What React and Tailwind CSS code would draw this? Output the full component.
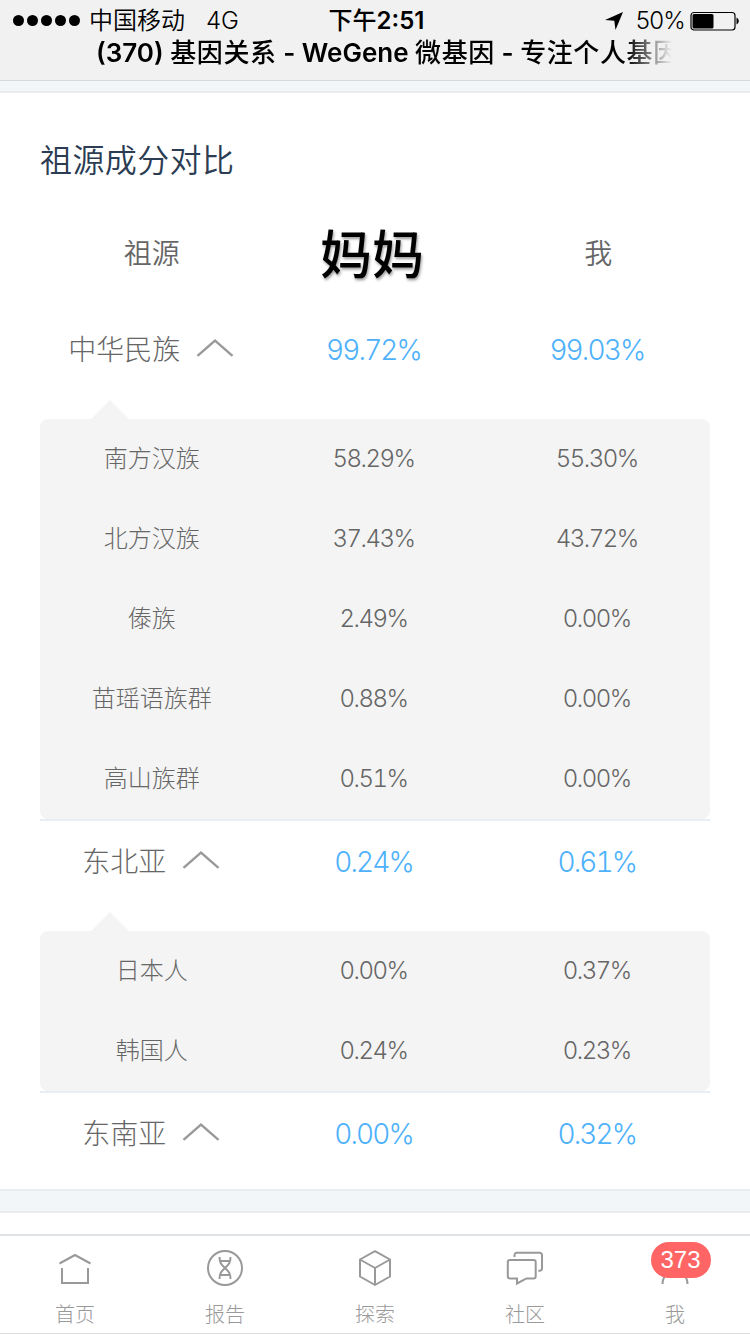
// App.jsx

// One block per ancestry group; each value pair is [mother, me].
const groups = [
  {
    name: "中华民族",
    values: ["99.72%", "99.03%"],
    rows: [
      { name: "南方汉族", values: ["58.29%", "55.30%"] },
      { name: "北方汉族", values: ["37.43%", "43.72%"] },
      { name: "傣族", values: ["2.49%", "0.00%"] },
      { name: "苗瑶语族群", values: ["0.88%", "0.00%"] },
      { name: "高山族群", values: ["0.51%", "0.00%"] },
    ],
  },
  {
    name: "东北亚",
    values: ["0.24%", "0.61%"],
    rows: [
      { name: "日本人", values: ["0.00%", "0.37%"] },
      { name: "韩国人", values: ["0.24%", "0.23%"] },
    ],
  },
  { name: "东南亚", values: ["0.00%", "0.32%"], rows: [] },
];

const iconProps = {
  viewBox: "0 0 40 40",
  className: "w-10 h-10",
  fill: "none",
  stroke: "currentColor",
  strokeWidth: 2,
};

function HomeIcon() {
  return (
    <svg {...iconProps}>
      <path d="M4.500 15.500L20 7l15.500 8.500" />
      <path d="M7 20v15h26V20" />
    </svg>
  );
}

function DnaIcon() {
  return (
    <svg {...iconProps}>
      <circle cx="20" cy="20" r="17" />
      <path d="M14.500 9c0 6.500 2.500 8 5.500 11s5.500 4.500 5.500 11M25.500 9c0 6.500-2.500 8-5.500 11s-5.500 4.500-5.500 11" />
      <path d="M15 13h10M15 27h10" />
    </svg>
  );
}

function CubeIcon() {
  return (
    <svg {...iconProps} strokeLinejoin="round">
      <path d="M20 3.200L35 11.500V28.500L20 37L5 28.500V11.500z" />
      <path d="M5 11.500L20 20l15-8.500M20 20v17" />
    </svg>
  );
}

function ChatIcon() {
  return (
    <svg {...iconProps}>
      <path d="M9.500 9V7A2.200 2.200 0 0 1 11.700 4.800H34.800A2.200 2.200 0 0 1 37 7v13.500a2.200 2.200 0 0 1-2.200 2.200h-1.500" />
      <path d="M5 12h23.500a2.200 2.200 0 0 1 2.200 2.200v14a2.200 2.200 0 0 1-2.200 2.200h-7L12 35.500v-5.100H5a2.200 2.200 0 0 1-2.200-2.200v-14A2.200 2.200 0 0 1 5 12z" />
    </svg>
  );
}

function UserIcon() {
  return (
    <svg {...iconProps}>
      <circle cx="20" cy="13" r="8" />
      <path d="M7.500 36c0-17 25-17 25 0" />
    </svg>
  );
}

const tabs = [
  { label: "首页", Icon: HomeIcon },
  { label: "报告", Icon: DnaIcon },
  { label: "探索", Icon: CubeIcon },
  { label: "社区", Icon: ChatIcon },
  { label: "我", Icon: UserIcon, badge: 373 },
];

function StatusBar() {
  return (
    <div className="grid grid-cols-[1fr_auto_1fr] items-center h-[34px] pt-[10px] pb-[3px] pl-[13px] pr-[10px] text-2xl leading-[21px]">
      <div className="flex items-center whitespace-nowrap">
        <div className="flex gap-[3px]">
          {[0, 1, 2, 3, 4].map((i) => (
            <span key={i} className="w-[11px] h-[11px] rounded-full bg-black" />
          ))}
        </div>
        <span className="ml-[9px] font-[350]">中国移动</span>
        <span className="ml-[21px] tracking-[-0.2px] font-[350]">4G</span>
      </div>
      <div className="font-semibold whitespace-nowrap">
        <span className="font-medium">下午</span>2:51
      </div>
      <div className="flex items-center justify-end">
        <svg viewBox="0 0 18 18" className="w-[18px] h-[18px] mr-[13px]">
          <path d="M18 0L10.500 18L9.300 8.800L0 8z" />
        </svg>
        <span className="tracking-[-0.8px] font-[350]">50%</span>
        <svg viewBox="0 0 50 20" className="w-[50px] h-5 ml-[5px]">
          <rect x="1" y="1.500" width="44" height="17.500" rx="3" fill="none" stroke="black" strokeWidth="1.200" />
          <rect x="2.500" y="3" width="21" height="14.500" rx="1.500" />
          <path d="M46.500 6.500c3 1.500 3 5.500 0 7z" />
        </svg>
      </div>
    </div>
  );
}

function Header() {
  return (
    <header className="h-[81px] border-b border-[#d5d9dc] bg-[#f1f1f1] text-black">
      <StatusBar />
      <div className="ml-[96px] w-[582px] overflow-hidden whitespace-nowrap text-[26px] leading-[37px] font-semibold [mask-image:linear-gradient(to_right,black_530px,transparent_576px)]">
        (370) <span className="font-medium tracking-[0.6px]">基因关系</span> - WeGene{" "}
        <span className="font-medium tracking-[0.6px]">微基因</span> -{" "}
        <span className="font-medium tracking-[0.6px]">专注个人基因</span>
      </div>
    </header>
  );
}

function Chevron() {
  return (
    <svg viewBox="0 0 38 20" className="w-[38px] h-5 ml-4 -mt-1 text-[#999]" fill="none" stroke="currentColor" strokeWidth={2.4}>
      <path d="M1.500 17.800L19 2.500l17.500 15.300" />
    </svg>
  );
}

function Group({ group, first }) {
  return (
    <section className={first ? "" : "border-t-2 border-[#e9eef2]"}>
      <div className="grid grid-cols-3 h-20 items-center pt-0.5 text-center text-[28px]">
        <div className="flex items-center justify-center pr-px text-[#666]">
          {group.name}
          <Chevron />
        </div>
        {group.values.map((value, i) => (
          <div key={i} className="pr-[3px] tabular-nums tracking-[-1.9px] text-[#4db1fb]">{value}</div>
        ))}
      </div>
      {group.rows.length > 0 && (
        <div className="relative mt-[30px] rounded-lg bg-[#f4f4f4] text-2xl text-[#666]">
          <svg viewBox="0 0 40 20" className="absolute left-[50px] -top-[19px] w-10 h-5 text-[#f4f4f4]" fill="currentColor">
            <path d="M0 20L20 0l20 20z" />
          </svg>
          {group.rows.map((row) => (
            <div key={row.name} className="grid grid-cols-3 h-20 items-center text-center">
              <div>{row.name}</div>
              {row.values.map((value, i) => (
                <div key={i} className="pr-[3px] tabular-nums tracking-[-1.5px]">{value}</div>
              ))}
            </div>
          ))}
        </div>
      )}
    </section>
  );
}

function TabBar() {
  return (
    <nav className="grid grid-cols-5 h-[100px] border-t-2 border-b border-t-[#dfe3e6] border-b-[#ddd] bg-white text-[#999]">
      {tabs.map(({ label, Icon, badge }) => (
        <div key={label} className="relative flex flex-col items-center pt-3">
          <Icon />
          <span className="mt-[13px] text-xl leading-[28px] font-light">{label}</span>
          {badge && (
            <span className="absolute left-[51px] top-[6px] w-[60px] h-9 rounded-full bg-[#ff6565] pr-px text-center font-['Liberation_Sans',sans-serif] text-2xl leading-[36px] text-white">
              {badge}
            </span>
          )}
        </div>
      ))}
    </nav>
  );
}

export default function App() {
  return (
    <div className="flex flex-col w-[750px] h-[1334px] overflow-hidden bg-white font-['Inter','Noto_Sans_CJK_SC',sans-serif]">
      <Header />
      <div className="h-3 shrink-0 border-b-2 border-[#e9edf0] bg-[#f2f6f9]" />
      <main className="h-[1096px] shrink-0 px-10 font-light">
        <h1 className="pt-[45px] text-[32px] leading-[46px] tracking-[0.4px] font-[350] text-[#2b3c53]">祖源成分对比</h1>
        <div className="grid grid-cols-3 h-[125px] items-center pt-[14px] text-center text-[28px] font-[350] text-[#666]">
          <div>祖源</div>
          <div className="pr-[6px] pt-1 text-[52px] leading-[60px] font-medium text-black [text-shadow:1px_2px_3px_rgba(0,0,0,0.4)]">妈妈</div>
          <div>我</div>
        </div>
        {groups.map((group, i) => (
          <Group key={group.name} group={group} first={i === 0} />
        ))}
      </main>
      <div className="h-6 shrink-0 border-y-2 border-[#e9edf0] bg-[#f2f6f9]" />
      <div className="h-[21px] shrink-0" />
      <TabBar />
    </div>
  );
}
